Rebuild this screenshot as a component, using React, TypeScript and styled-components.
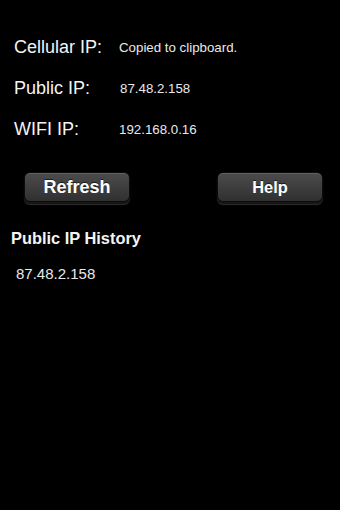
import React, { FC } from "react";
import styled, { createGlobalStyle } from "styled-components";

const GlobalStyle = createGlobalStyle`
  html, body {
    margin: 0;
    padding: 0;
    background: #000;
  }
  body {
    font-family: "Liberation Sans", Arial, Helvetica, sans-serif;
    color: #fff;
  }
`;

const Screen = styled.div`
  width: 340px;
  height: 510px;
  background: #000;
  display: flex;
  flex-direction: column;
  padding-top: 27px;
  box-sizing: border-box;
`;

const InfoList = styled.div`
  display: flex;
  flex-direction: column;
  padding-left: 14px;
`;

const InfoRow = styled.div`
  display: flex;
  align-items: center;
  height: 41px;
`;

const Label = styled.span`
  width: 105px;
  font-size: 18px;
  color: #f4f4f4;
`;

const Value = styled.span<{ $offset?: number }>`
  font-size: 13.3px;
  color: #eaeaea;
  margin-left: ${(p) => p.$offset ?? 0}px;
`;

const ButtonBar = styled.div`
  display: flex;
  justify-content: space-between;
  padding: 22px 17px 0 24px;
`;

const Button = styled.button<{ $small?: boolean }>`
  width: 106px;
  height: 30px;
  border: 1px solid #0c0c0c;
  border-radius: 6px;
  background: linear-gradient(#4c4c4c 0%, #3e3e3e 50%, #303030 100%);
  box-shadow: inset 0 1px 0 rgba(255, 255, 255, 0.12), 0 2px 0 #161616,
    0 3px 1px #2e2e2e;
  color: #fff;
  font-family: "Liberation Sans", Arial, sans-serif;
  font-weight: bold;
  font-size: ${(p) => (p.$small ? 16.4 : 18)}px;
  padding: 0;
  text-shadow: 0 -1px 0 rgba(0, 0, 0, 0.6);
`;

const HistoryTitle = styled.div`
  margin: 27px 0 0 11px;
  font-size: 16.4px;
  font-weight: bold;
  color: #f4f4f4;
`;

const HistoryItem = styled.div`
  margin: 17px 0 0 16px;
  font-size: 15px;
  color: #e8e8e8;
`;

const rows = [
  { label: "Cellular IP:", value: "Copied to clipboard.", offset: 0 },
  { label: "Public IP:", value: "87.48.2.158", offset: 1 },
  { label: "WIFI IP:", value: "192.168.0.16", offset: 0 },
];

const App: FC = () => (
  <>
    <GlobalStyle />
    <Screen>
      <InfoList>
        {rows.map((r) => (
          <InfoRow key={r.label}>
            <Label>{r.label}</Label>
            <Value $offset={r.offset}>{r.value}</Value>
          </InfoRow>
        ))}
      </InfoList>
      <ButtonBar>
        <Button>Refresh</Button>
        <Button $small>Help</Button>
      </ButtonBar>
      <HistoryTitle>Public IP History</HistoryTitle>
      <HistoryItem>87.48.2.158</HistoryItem>
    </Screen>
  </>
);

export default App;
